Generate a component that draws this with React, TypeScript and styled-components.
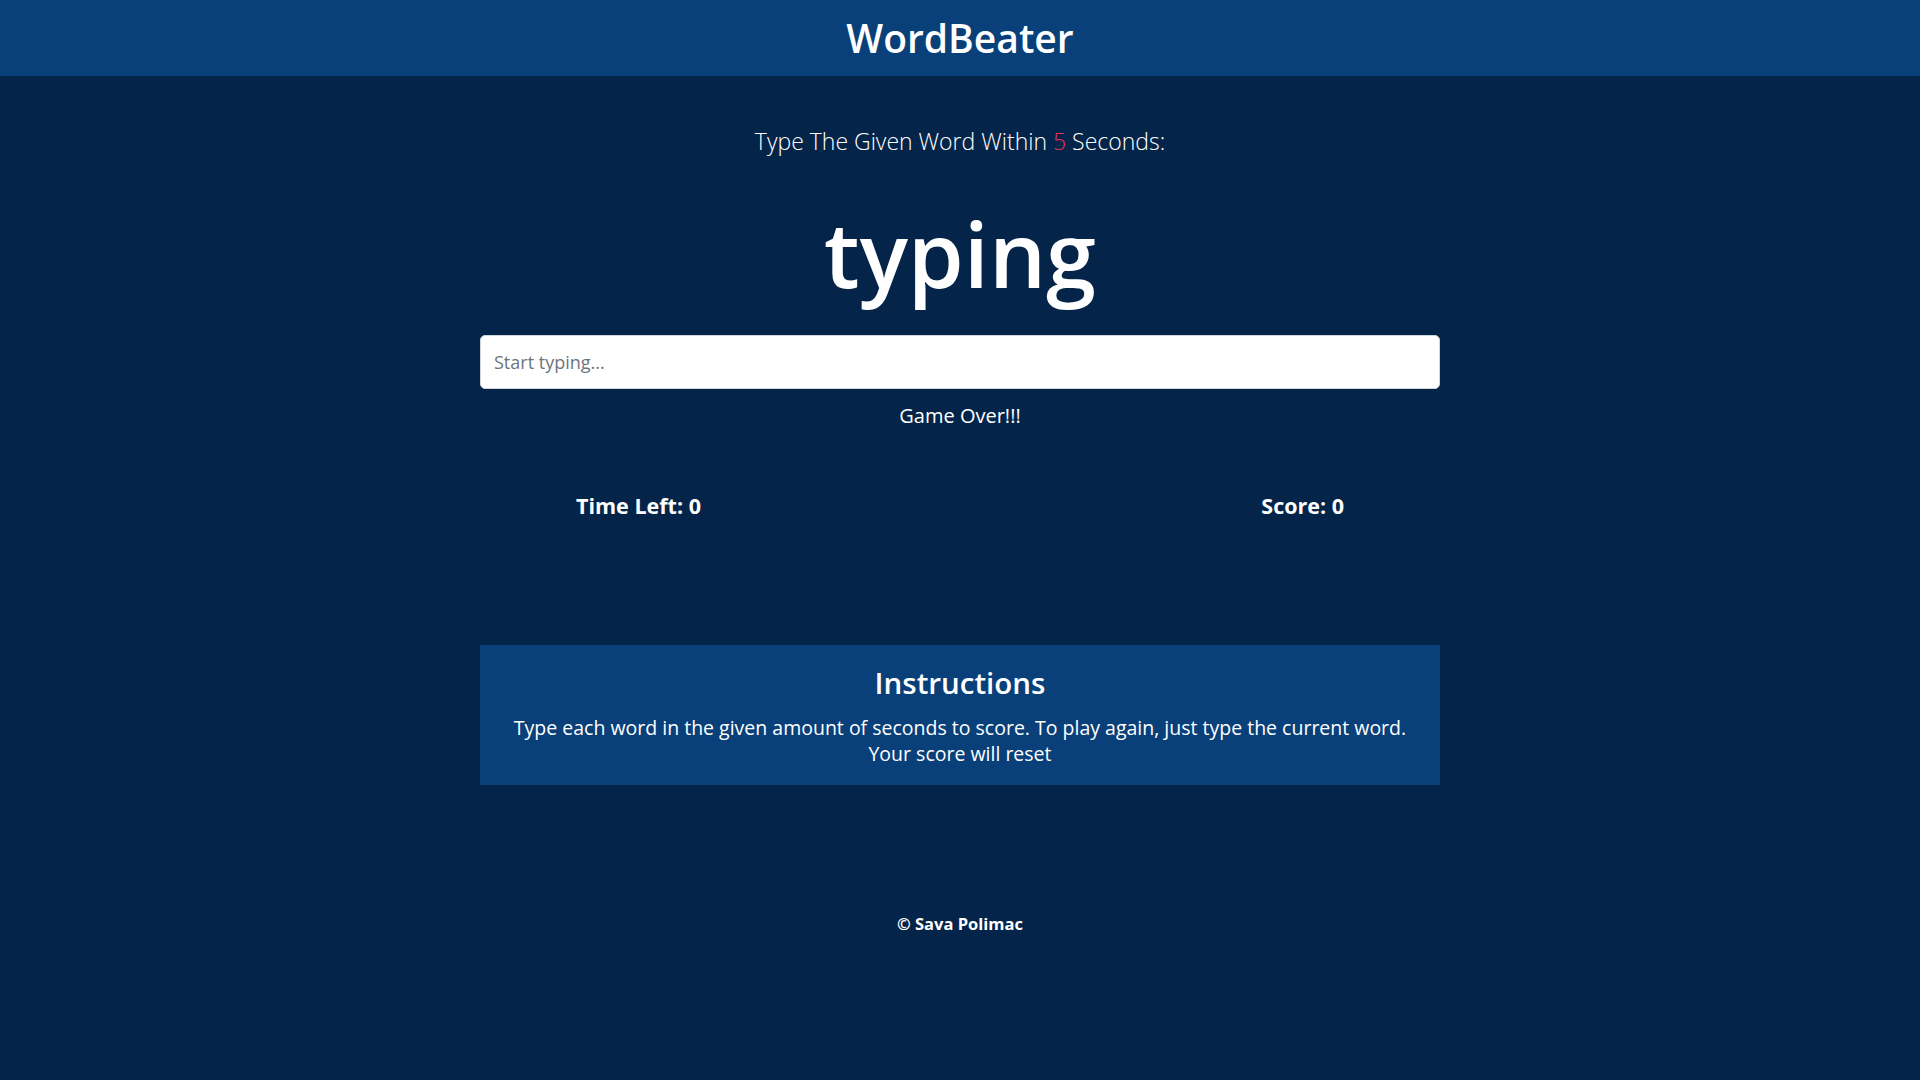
import React from "react";
import styled, { createGlobalStyle } from "styled-components";

const GlobalStyle = createGlobalStyle`
  html, body {
    margin: 0;
    padding: 0;
    background: #042549;
  }
  body {
    font-family: "Open Sans", "Noto Sans", "Liberation Sans", sans-serif;
    color: #ffffff;
    min-height: 1080px;
  }
  * { box-sizing: border-box; }
`;

const Header = styled.header`
  height: 76px;
  background: #0a4079;
  display: flex;
  align-items: center;
  justify-content: center;
  padding-bottom: 2px;
`;

const Brand = styled.h1`
  margin: 0;
  font-size: 39px;
  font-weight: 600;
  line-height: 1;
`;

const Main = styled.main`
  width: 960px;
  margin: 0 auto;
  display: flex;
  flex-direction: column;
  align-items: stretch;
  text-align: center;
`;

const Lead = styled.p`
  margin: 51px 0 0;
  font-size: 23px;
  font-weight: 300;
  line-height: 29px;
`;

const Accent = styled.span`
  color: #e8305f;
`;

const Word = styled.h2`
  margin: 44px 0 0;
  font-size: 90px;
  font-weight: 600;
  line-height: 106px;
`;

const Input = styled.input`
  margin-top: 29px;
  height: 54px;
  width: 100%;
  border: 1px solid #ced4da;
  border-radius: 5px;
  background: #ffffff;
  padding: 0 13px;
  font-family: inherit;
  font-size: 18px;
  color: #495057;
  outline: none;
  &::placeholder {
    color: #6c757d;
  }
`;

const Status = styled.p`
  margin: 12px 0 0;
  font-size: 20px;
  line-height: 30px;
`;

const StatsRow = styled.div`
  margin-top: 61px;
  display: flex;
  justify-content: space-between;
  padding: 0 96px;
`;

const Stat = styled.h3`
  margin: 0;
  font-size: 21.5px;
  font-weight: 700;
  line-height: 28px;
`;

const Card = styled.section`
  margin-top: 125px;
  background: #0a4079;
  padding: 20px 24px 18px;
`;

const CardTitle = styled.h3`
  margin: 0 0 15px;
  font-size: 29.5px;
  font-weight: 600;
  line-height: 35px;
`;

const CardText = styled.p`
  margin: 0;
  font-size: 19.5px;
  line-height: 26px;
  font-weight: 400;
`;

const Footer = styled.footer`
  margin-top: 127px;
  text-align: center;
  font-size: 16.5px;
  font-weight: 700;
  line-height: 24px;
`;

export default function App() {
  return (
    <>
      <GlobalStyle />
      <Header>
        <Brand>WordBeater</Brand>
      </Header>
      <Main>
        <Lead>
          Type The Given Word Within <Accent>5</Accent> Seconds:
        </Lead>
        <Word>typing</Word>
        <Input type="text" placeholder="Start typing..." />
        <Status>Game Over!!!</Status>
        <StatsRow>
          <Stat>Time Left: 0</Stat>
          <Stat>Score: 0</Stat>
        </StatsRow>
        <Card>
          <CardTitle>Instructions</CardTitle>
          <CardText>
            Type each word in the given amount of seconds to score. To play again, just type the current word. Your score will reset
          </CardText>
        </Card>
        <Footer>© Sava Polimac</Footer>
      </Main>
    </>
  );
}
